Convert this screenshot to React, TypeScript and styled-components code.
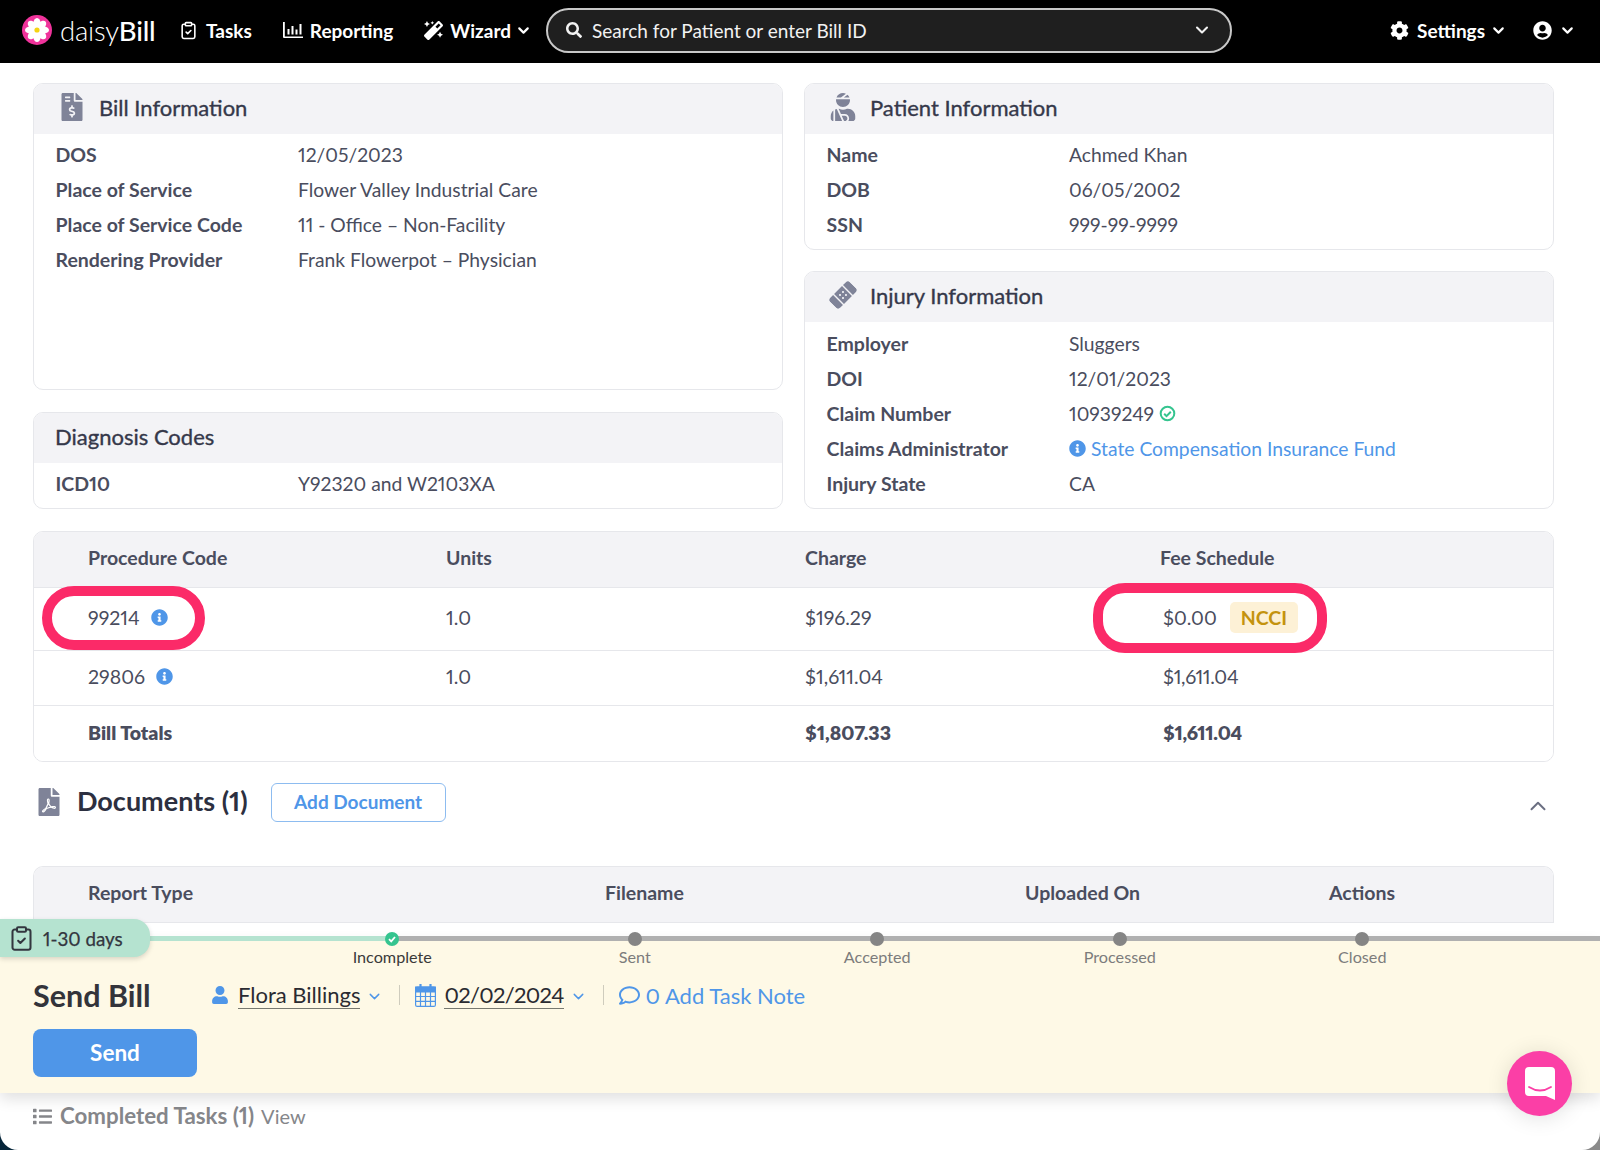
import React from "react";
import styled, { createGlobalStyle } from "styled-components";
import {
  FaBandAid,
  FaCog,
  FaFileInvoiceDollar,
  FaFilePdf,
  FaInfoCircle,
  FaList,
  FaMagic,
  FaRegComment,
  FaSearch,
  FaUser,
  FaUserCircle,
  FaUserInjured,
} from "react-icons/fa";
import { ChevronDown, ChevronUp, ClipboardCheck } from "lucide-react";

const GlobalStyle = createGlobalStyle`
  html, body {
    margin: 0;
    padding: 0;
    background: #fff;
  }
  * {
    box-sizing: border-box;
  }
`;

const Frame = styled.div`
  width: 1600px;
  height: 1150px;
  background: linear-gradient(to right, #06263a 50%, #8a8a8a 50%);
  font-family: "Lato", "Liberation Sans", sans-serif;
  font-variant-numeric: proportional-nums;
  font-feature-settings: "pnum" 1, "lnum" 1;
  color: #4a4d5e;
`;

const Page = styled.div`
  position: relative;
  width: 100%;
  height: 100%;
  display: flex;
  flex-direction: column;
  overflow: hidden;
  background: #fff;
  border-radius: 0 0 18px 18px;
`;

const TopBar = styled.header`
  flex: none;
  height: 63px;
  background: #000;
  color: #fff;
  display: flex;
  align-items: center;
  padding: 0 24px 3px 22px;
`;

const Brand = styled.div`
  display: flex;
  align-items: center;
  gap: 8px;
  width: 159px;
  font-size: 27.5px;
  font-weight: 300;
  letter-spacing: -0.2px;

  b {
    font-weight: 500;
  }
`;

const NavItem = styled.div<{ $ml: number; $gap?: number }>`
  display: flex;
  align-items: center;
  gap: ${(p) => p.$gap ?? 8}px;
  margin-left: ${(p) => p.$ml}px;
  font-size: 19px;
  font-weight: 700;
`;

const SearchBox = styled.div`
  width: 686px;
  height: 45px;
  margin-left: 14px;
  display: flex;
  align-items: center;
  gap: 10px;
  padding: 0 18px;
  background: #1f1f1f;
  border: 2px solid #c8c8c8;
  border-radius: 23px;
  font-size: 19px;
  color: #f2f2f2;
`;

const SearchText = styled.span`
  flex: 1;
`;

const NavRight = styled.div`
  margin-left: auto;
  display: flex;
  align-items: center;
`;

const Main = styled.main`
  flex: 1;
  min-height: 0;
  overflow: hidden;
  padding: 20px 46px 0 33px;
  display: flex;
  flex-direction: column;
  gap: 22px;
`;

const Columns = styled.div`
  display: grid;
  grid-template-columns: 750px 750px;
  gap: 21px;
`;

const Stack = styled.div`
  display: flex;
  flex-direction: column;
  gap: 22px;
`;

const RightStack = styled(Stack)`
  gap: 21px;
`;

const Card = styled.section<{ $height: number }>`
  height: ${(p) => p.$height}px;
  border: 1px solid #e6e7eb;
  border-radius: 10px;
  overflow: hidden;
  background: #fff;
  flex: none;
`;

const CardHead = styled.div`
  height: 50px;
  padding: 0 0 4px 21px;
  background: #f3f3f6;
  display: flex;
  align-items: center;
  font-size: 22px;
  font-weight: 400;
  -webkit-text-stroke: 0.35px #35384a;
  color: #35384a;
`;

const HeadIcon = styled.span`
  width: 41px;
  margin-left: 3px;
  display: flex;
  align-items: center;
  font-size: 28px;
  color: #7f8398;
  -webkit-text-stroke: 0;
`;

const TiltedBandAid = styled(FaBandAid)`
  transform: rotate(-45deg);
`;

const Rows = styled.div<{ $top?: number }>`
  padding-top: ${(p) => p.$top ?? 3}px;
`;

const Row = styled.div`
  display: grid;
  grid-template-columns: 242.5px 1fr;
  padding-left: 21.5px;
  height: 35px;
  align-items: center;
  font-size: 19.5px;
`;

const Label = styled.span`
  font-weight: 700;
`;

const Value = styled.span`
  display: flex;
  align-items: center;
  gap: 5px;
  font-size: 19.3px;
`;

const LinkValue = styled(Value)`
  color: #4f96e8;
`;

const TableCard = styled.section`
  position: relative;
  flex: none;
  border: 1px solid #e6e7eb;
  border-radius: 10px;
  overflow: hidden;
  font-size: 19.5px;
`;

const BillGrid = styled.div<{ $height: number; $head?: boolean; $border?: boolean }>`
  display: grid;
  grid-template-columns: 358px 359px 355px 1fr;
  align-items: center;
  height: ${(p) => p.$height}px;
  padding: 0 0 ${(p) => (p.$head ? 5 : 3)}px 54px;
  background: ${(p) => (p.$head ? "#f3f3f6" : "#fff")};
  border-bottom: ${(p) => (p.$border ? "1px solid #e6e7eb" : "none")};
  font-weight: ${(p) => (p.$head ? 700 : 400)};
`;

const DocGrid = styled(BillGrid)`
  grid-template-columns: 517px 420px 304px 1fr;
`;

const Strong = styled.span`
  font-weight: 800;
`;

const Code = styled.span`
  display: flex;
  align-items: center;
  gap: 11px;
`;

const InfoIcon = styled(FaInfoCircle)`
  color: #4f96e8;
  font-size: 17px;
`;

const Fee = styled.span`
  display: flex;
  align-items: center;
  gap: 13px;
  padding-left: 3px;
`;

const FeePlain = styled.span`
  padding-left: 3px;
  letter-spacing: -0.3px;
`;

const Badge = styled.span`
  padding: 4px 11px;
  border-radius: 5px;
  background: #fdf1d6;
  color: #c4930f;
  font-weight: 700;
`;

const Ring = styled.div<{ $left: number; $top: number; $width: number; $height: number }>`
  position: absolute;
  left: ${(p) => p.$left}px;
  top: ${(p) => p.$top}px;
  width: ${(p) => p.$width}px;
  height: ${(p) => p.$height}px;
  border: 10px solid #fb2a68;
  border-radius: 32px;
  pointer-events: none;
`;

const DocsSection = styled.div`
  margin-top: -2px;
`;

const DocsHead = styled.div`
  flex: none;
  height: 40px;
  display: flex;
  align-items: center;
  margin-bottom: 44px;
  color: #2c2f40;
`;

const DocsIcon = styled(FaFilePdf)`
  font-size: 28px;
  color: #7f8398;
  margin-left: 2px;
`;

const DocsTitle = styled.h2`
  margin: 0 23px 3px 14px;
  font-size: 27px;
  font-weight: 700;
`;

const OutlineButton = styled.button`
  width: 175px;
  height: 39px;
  padding-bottom: 2px;
  background: #fff;
  border: 1px solid #8dbcf0;
  border-radius: 6px;
  color: #4f96e8;
  font: 700 19px "Lato", "Liberation Sans", sans-serif;
`;

const Collapse = styled(ChevronUp)`
  margin-left: auto;
  margin-right: 3px;
  margin-top: 8px;
  color: #6b6f82;
`;

const DocsCard = styled(TableCard)`
  flex: 1;
  border-bottom: none;
  border-radius: 10px 10px 0 0;
`;

const Dock = styled.section`
  position: relative;
  flex: none;
  height: 155px;
  background: #fef9e6;
  box-shadow: 0 6px 14px rgba(0, 0, 0, 0.12);
  z-index: 2;
`;

const Track = styled.div`
  position: absolute;
  left: 0;
  right: 0;
  top: -2px;
  height: 5px;
  background: linear-gradient(to right, #b5e3d0 392px, #b0b0b0 392px);
`;

const AgePill = styled.div`
  position: absolute;
  left: 0;
  top: -19px;
  width: 150px;
  height: 38px;
  display: flex;
  align-items: center;
  gap: 8px;
  padding-left: 8px;
  background: #b5e3d0;
  border-radius: 0 16px 16px 0;
  box-shadow: 0 2px 5px rgba(0, 0, 0, 0.15);
  font-size: 18.8px;
  font-weight: 400;
  -webkit-text-stroke: 0.25px #33363f;
  color: #33363f;
`;

const Steps = styled.ol`
  list-style: none;
  margin: 0;
  padding: 0 0 0 271px;
  position: relative;
  top: -6px;
  display: flex;
`;

const Step = styled.li<{ $active?: boolean }>`
  width: 242.5px;
  display: flex;
  flex-direction: column;
  align-items: center;
  gap: 1px;
  font-size: 16.2px;
  color: ${(p) => (p.$active ? "#3a3a3a" : "#7c7c7c")};
`;

const Dot = styled.span<{ $done?: boolean }>`
  width: 14px;
  height: 14px;
  border-radius: 50%;
  display: flex;
  align-items: center;
  justify-content: center;
  background: ${(p) => (p.$done ? "#35c48f" : "#858585")};
`;

const TaskRow = styled.div`
  display: flex;
  align-items: center;
  padding: 5px 0 0 33px;
  font-size: 22px;
`;

const TaskTitle = styled.h3`
  margin: 0;
  width: 178px;
  font-size: 30.5px;
  font-weight: 700;
  color: #33343a;
`;

const Meta = styled.span`
  display: flex;
  align-items: center;
  color: #2a2b31;
`;

const MetaIcon = styled.span<{ $gap: number }>`
  display: flex;
  color: #4f96e8;
  margin-right: ${(p) => p.$gap}px;
  font-size: 21px;
`;

const Underlined = styled.span`
  border-bottom: 1px solid #77786f;
  line-height: 26px;
`;

const DateText = styled(Underlined)`
  letter-spacing: -0.7px;
`;

const MetaChevron = styled(ChevronDown)`
  margin: 2px 0 0 6px;
  color: #4f96e8;
`;

const Divider = styled.span`
  width: 1px;
  height: 20px;
  margin: 0 15px 0 16px;
  background: #cfccbd;
`;

const NoteLink = styled.span`
  display: flex;
  align-items: center;
  gap: 6px;
  color: #4f96e8;
  font-size: 22px;
`;

const SendButton = styled.button`
  display: block;
  width: 164px;
  height: 48px;
  margin: 16px 0 0 33px;
  padding-bottom: 2px;
  border: none;
  border-radius: 8px;
  background: #4f96e8;
  color: #fff;
  font: 700 22.5px "Lato", "Liberation Sans", sans-serif;
`;

const Completed = styled.footer`
  flex: none;
  height: 57px;
  padding: 10px 0 0 33px;
  display: flex;
  align-items: flex-start;
  gap: 7px;
  font-size: 22.3px;
  line-height: 26px;
  color: #85868a;

  b {
    font-weight: 700;
  }

  span {
    font-size: 20px;
  }
`;

const ListIcon = styled(FaList)`
  font-size: 19px;
  margin-top: 4px;
  margin-right: 1px;
`;

const ChatButton = styled.div`
  position: absolute;
  right: 28px;
  bottom: 34px;
  width: 65px;
  height: 65px;
  border-radius: 50%;
  background: #fb3fa6;
  box-shadow: 0 2px 22px rgba(0, 0, 0, 0.12);
  display: flex;
  align-items: center;
  justify-content: center;
  z-index: 3;
`;

const petals = [0, 45, 90, 135, 180, 225, 270, 315];

const DaisyLogo = () => (
  <svg width="30" height="30" viewBox="0 0 30 30">
    <circle cx="15" cy="15" r="15" fill="#f0339b" />
    {petals.map((a) => (
      <ellipse key={a} cx="15" cy="8.5" rx="3.6" ry="5.5" fill="#fff" transform={`rotate(${a} 15 15)`} />
    ))}
    <circle cx="15" cy="15" r="2.6" fill="#f5d312" />
  </svg>
);

const ReportIcon = () => (
  <svg width="20" height="18" viewBox="0 0 20 18" fill="#fff">
    <path d="M0 1h1.8v14.4H20V17H1a1 1 0 0 1-1-1z" />
    <rect x="4.5" y="8" width="2" height="5.5" />
    <rect x="8.5" y="5" width="2" height="8.5" />
    <rect x="12.5" y="8.5" width="2" height="5" />
    <rect x="16.5" y="3" width="2" height="10.5" />
  </svg>
);

const GreenCheck = () => (
  <svg width="17" height="17" viewBox="0 0 17 17" fill="none" stroke="#35c48f" strokeWidth="2">
    <circle cx="8.5" cy="8.5" r="6.8" />
    <path d="M5.2 8.8l2.300 2.300 4.300-4.400" />
  </svg>
);

const CalendarGrid = () => (
  <svg width="21" height="23" viewBox="0 0 21 23" fill="none" stroke="#4f96e8" strokeWidth="1.200">
    <rect x="0.6" y="3" width="19.800" height="19.400" rx="1.500" />
    <path d="M0.600 3h19.800v5H0.600z" fill="#4f96e8" />
    <path d="M0.600 12.500h19.800M0.600 17.300h19.800M5.500 8v14M10.500 8v14M15.500 8v14" />
    <path d="M5.500 0.500v4M15.500 0.500v4" strokeWidth="2.200" strokeLinecap="round" />
  </svg>
);

const ChatGlyph = () => (
  <svg width="30" height="33" viewBox="0 0 30 33">
    <path d="M4 0h22a4 4 0 0 1 4 4v29l-9-4H4a4 4 0 0 1-4-4V4a4 4 0 0 1 4-4z" fill="#fff" />
    <path d="M4 20c7 4.500 15 4.500 22 0" fill="none" stroke="#fb3fa6" strokeWidth="1.800" strokeLinecap="round" />
  </svg>
);

const Chevron = ({ ml = 7 }: { ml?: number }) => (
  <ChevronDown size={17} strokeWidth={3} style={{ marginLeft: ml }} />
);

const App: React.FC = () => {
  const steps = ["Incomplete", "Sent", "Accepted", "Processed", "Closed"];

  return (
    <Frame>
      <GlobalStyle />
      <Page>
        <TopBar>
          <Brand>
            <DaisyLogo />
            <span>
              daisy<b>Bill</b>
            </span>
          </Brand>
          <NavItem $ml={-2}>
            <ClipboardCheck size={19} />
            Tasks
          </NavItem>
          <NavItem $ml={31} $gap={7}>
            <ReportIcon />
            Reporting
          </NavItem>
          <NavItem $ml={31} $gap={7}>
            <FaMagic size={19} />
            Wizard
            <Chevron ml={-3} />
          </NavItem>
          <SearchBox>
            <FaSearch size={16} />
            <SearchText>Search for Patient or enter Bill ID</SearchText>
            <ChevronDown size={20} strokeWidth={2.500} />
          </SearchBox>
          <NavRight>
            <NavItem $ml={0}>
              <FaCog size={19} />
              Settings
              <Chevron ml={-3} />
            </NavItem>
            <NavItem $ml={26}>
              <FaUserCircle size={19} />
              <Chevron ml={-1} />
            </NavItem>
          </NavRight>
        </TopBar>

        <Main>
          <Columns>
            <Stack>
              <Card $height={307}>
                <CardHead>
                  <HeadIcon>
                    <FaFileInvoiceDollar />
                  </HeadIcon>
                  Bill Information
                </CardHead>
                <Rows>
                  <Row>
                    <Label>DOS</Label>
                    <Value>12/05/2023</Value>
                  </Row>
                  <Row>
                    <Label>Place of Service</Label>
                    <Value>Flower Valley Industrial Care</Value>
                  </Row>
                  <Row>
                    <Label>Place of Service Code</Label>
                    <Value>11 - Office – Non-Facility</Value>
                  </Row>
                  <Row>
                    <Label>Rendering Provider</Label>
                    <Value>Frank Flowerpot – Physician</Value>
                  </Row>
                </Rows>
              </Card>
              <Card $height={97}>
                <CardHead>Diagnosis Codes</CardHead>
                <Rows>
                  <Row>
                    <Label>ICD10</Label>
                    <Value>Y92320 and W2103XA</Value>
                  </Row>
                </Rows>
              </Card>
            </Stack>
            <RightStack>
              <Card $height={167}>
                <CardHead>
                  <HeadIcon>
                    <FaUserInjured />
                  </HeadIcon>
                  Patient Information
                </CardHead>
                <Rows>
                  <Row>
                    <Label>Name</Label>
                    <Value>Achmed Khan</Value>
                  </Row>
                  <Row>
                    <Label>DOB</Label>
                    <Value>06/05/2002</Value>
                  </Row>
                  <Row>
                    <Label>SSN</Label>
                    <Value>999-99-9999</Value>
                  </Row>
                </Rows>
              </Card>
              <Card $height={238}>
                <CardHead>
                  <HeadIcon>
                    <TiltedBandAid />
                  </HeadIcon>
                  Injury Information
                </CardHead>
                <Rows $top={4}>
                  <Row>
                    <Label>Employer</Label>
                    <Value>Sluggers</Value>
                  </Row>
                  <Row>
                    <Label>DOI</Label>
                    <Value>12/01/2023</Value>
                  </Row>
                  <Row>
                    <Label>Claim Number</Label>
                    <Value>
                      10939249 <GreenCheck />
                    </Value>
                  </Row>
                  <Row>
                    <Label>Claims Administrator</Label>
                    <LinkValue>
                      <InfoIcon /> State Compensation Insurance Fund
                    </LinkValue>
                  </Row>
                  <Row>
                    <Label>Injury State</Label>
                    <Value>CA</Value>
                  </Row>
                </Rows>
              </Card>
            </RightStack>
          </Columns>

          <TableCard>
            <BillGrid $height={56} $head $border>
              <span>Procedure Code</span>
              <span>Units</span>
              <span>Charge</span>
              <span>Fee Schedule</span>
            </BillGrid>
            <BillGrid $height={63} $border>
              <Code>
                99214 <InfoIcon />
              </Code>
              <span>1.0</span>
              <span>$196.29</span>
              <Fee>
                $0.00 <Badge>NCCI</Badge>
              </Fee>
            </BillGrid>
            <BillGrid $height={55} $border>
              <Code>
                29806 <InfoIcon />
              </Code>
              <span>1.0</span>
              <span>$1,611.04</span>
              <FeePlain>$1,611.04</FeePlain>
            </BillGrid>
            <BillGrid $height={55}>
              <Strong>Bill Totals</Strong>
              <span />
              <Strong>$1,807.33</Strong>
              <FeePlain>
                <Strong>$1,611.04</Strong>
              </FeePlain>
            </BillGrid>
            <Ring $left={8} $top={54} $width={163} $height={64} />
            <Ring $left={1059} $top={51} $width={234} $height={70} />
          </TableCard>

          <DocsSection>
            <DocsHead>
              <DocsIcon />
              <DocsTitle>Documents (1)</DocsTitle>
              <OutlineButton>Add Document</OutlineButton>
              <Collapse size={26} strokeWidth={1.800} />
            </DocsHead>
            <DocsCard>
              <DocGrid $height={56} $head $border>
                <span>Report Type</span>
                <span>Filename</span>
                <span>Uploaded On</span>
                <span>Actions</span>
              </DocGrid>
            </DocsCard>
          </DocsSection>
        </Main>

        <Dock>
          <Track />
          <AgePill>
            <ClipboardCheck size={27} strokeWidth={1.800} />
            1-30 days
          </AgePill>
          <Steps>
            {steps.map((step, index) => (
              <Step key={step} $active={index === 0}>
                <Dot $done={index === 0}>
                  {index === 0 && (
                    <svg width="10" height="10" viewBox="0 0 10 10">
                      <path d="M2 5.200l2.200 2.200L8 3" fill="none" stroke="#fff" strokeWidth="1.800" />
                    </svg>
                  )}
                </Dot>
                {step}
              </Step>
            ))}
          </Steps>
          <TaskRow>
            <TaskTitle>Send Bill</TaskTitle>
            <Meta>
              <MetaIcon $gap={9}>
                <FaUser size={18} />
              </MetaIcon>
              <Underlined>Flora Billings</Underlined>
              <MetaChevron size={17} />
            </Meta>
            <Divider />
            <Meta>
              <MetaIcon $gap={8}>
                <CalendarGrid />
              </MetaIcon>
              <DateText>02/02/2024</DateText>
              <MetaChevron size={17} />
            </Meta>
            <Divider />
            <NoteLink>
              <FaRegComment size={21} />0 Add Task Note
            </NoteLink>
          </TaskRow>
          <SendButton>Send</SendButton>
        </Dock>

        <Completed>
          <ListIcon />
          <b>Completed Tasks (1)</b>
          <span>View</span>
        </Completed>

        <ChatButton>
          <ChatGlyph />
        </ChatButton>
      </Page>
    </Frame>
  );
};

export default App;
